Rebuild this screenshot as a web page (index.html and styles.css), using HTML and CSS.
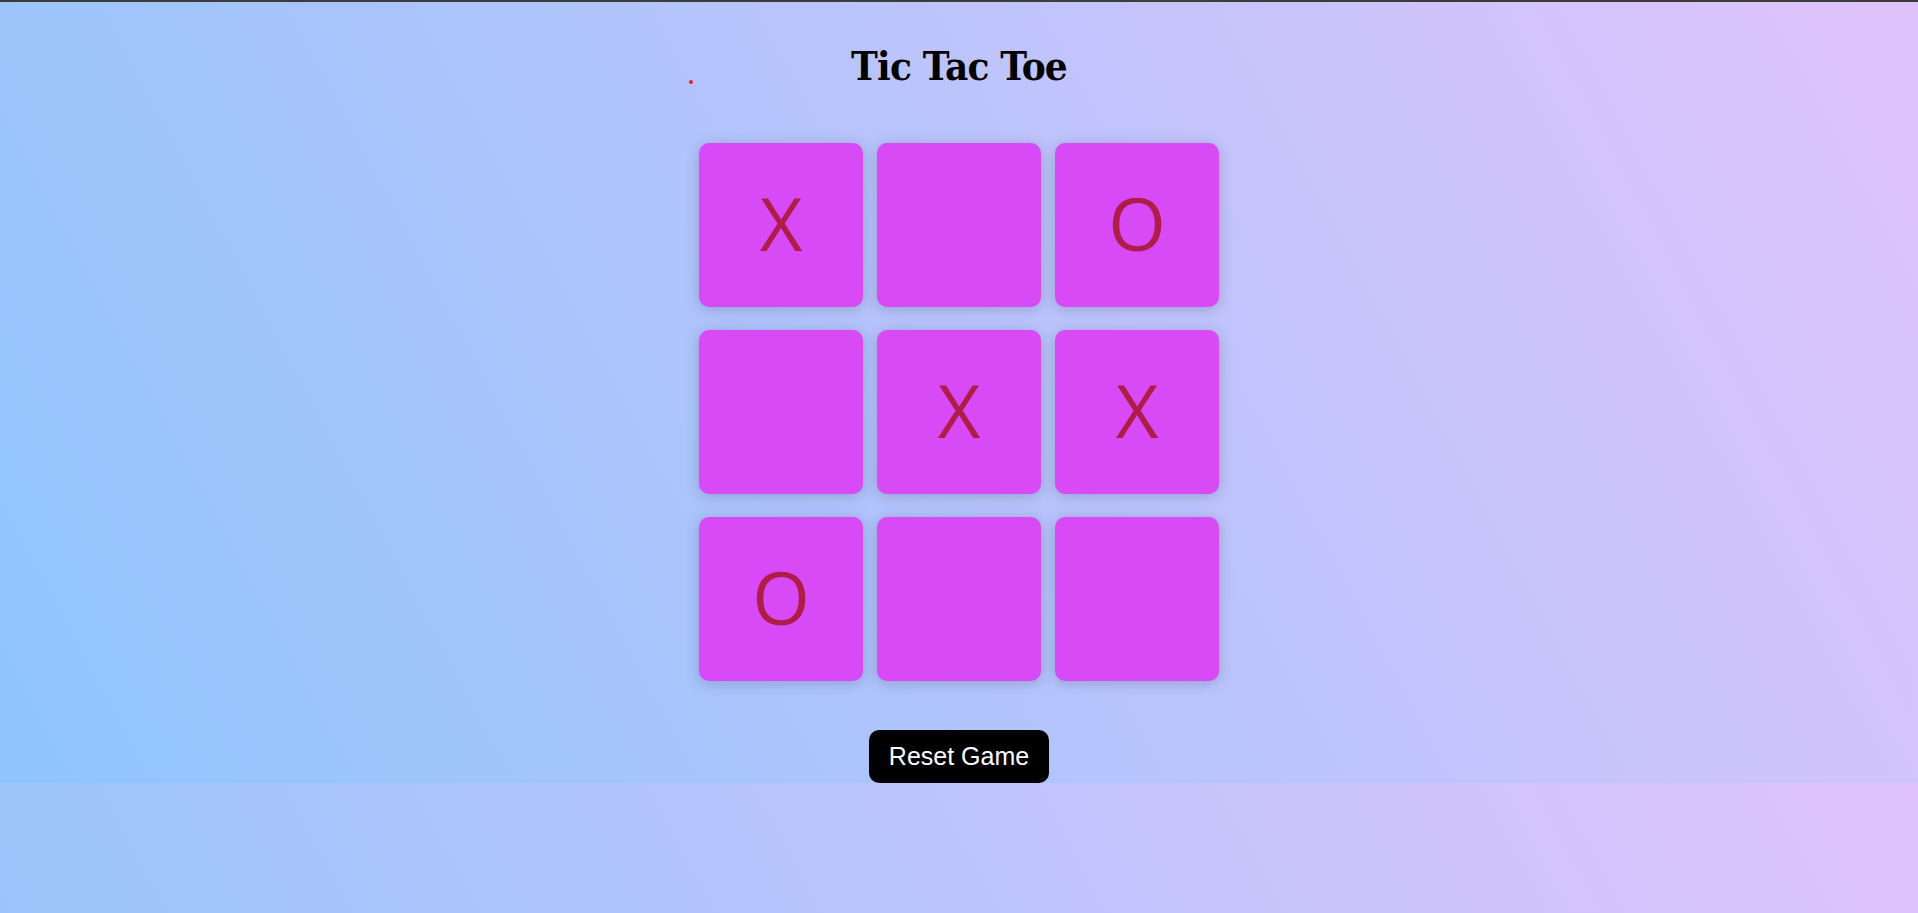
FILE: index.html
```html
<!DOCTYPE html>
<html lang="en">
<head>
<meta charset="UTF-8">
<title>Tic Tac Toe</title>
<link rel="stylesheet" href="styles.css">
</head>
<body>
<div class="topline"></div>
<main class="game">
  <span class="status-dot"></span>
  <h1 class="title">Tic Tac Toe</h1>
  <div class="board">
    <div class="cell">X</div>
    <div class="cell"></div>
    <div class="cell">O</div>
    <div class="cell"></div>
    <div class="cell">X</div>
    <div class="cell">X</div>
    <div class="cell">O</div>
    <div class="cell"></div>
    <div class="cell"></div>
  </div>
  <button class="reset">Reset Game</button>
</main>
</body>
</html>
```

FILE: styles.css
```css
html {
  margin: 0;
  padding: 0;
}
body {
  margin: 0;
  padding: 0;
  background-image: linear-gradient(62deg, #8ec5fc 0%, #e0c3fc 100%);
  font-family: "Liberation Sans", Arial, sans-serif;
}
.topline {
  height: 2px;
  background: #3c3c3c;
}
.game {
  position: relative;
  width: 520px;
  margin: 0 auto;
  display: flex;
  flex-direction: column;
  align-items: center;
}
.status-dot {
  position: absolute;
  left: -10px;
  top: 78px;
  width: 4px;
  height: 4px;
  border-radius: 50%;
  background: #e3202c;
}
.title {
  margin: 40px 0 0 0;
  font-family: "DejaVu Serif Condensed", "DejaVu Serif", serif;
  font-weight: bold;
  font-size: 40px;
  line-height: 48px;
  letter-spacing: -0.8px;
  color: #000;
}
.board {
  margin-top: 53px;
  display: grid;
  grid-template-columns: repeat(3, 164px);
  grid-auto-rows: 164px;
  column-gap: 14px;
  row-gap: 23px;
}
.cell {
  background: #d74af5;
  border-radius: 10px;
  box-shadow: 0 2px 14px rgba(60, 60, 90, 0.28);
  display: flex;
  align-items: center;
  justify-content: center;
  padding-bottom: 4px;
  font-family: "Open Sans", sans-serif;
  font-size: 74px;
  color: #ae1c48;
  line-height: 1;
}
.reset {
  margin-top: 49px;
  background: #000;
  color: #fff;
  border: none;
  border-radius: 10px;
  font-family: "Liberation Sans", Arial, sans-serif;
  font-size: 25px;
  padding: 12px 20px;
  cursor: pointer;
}
```
